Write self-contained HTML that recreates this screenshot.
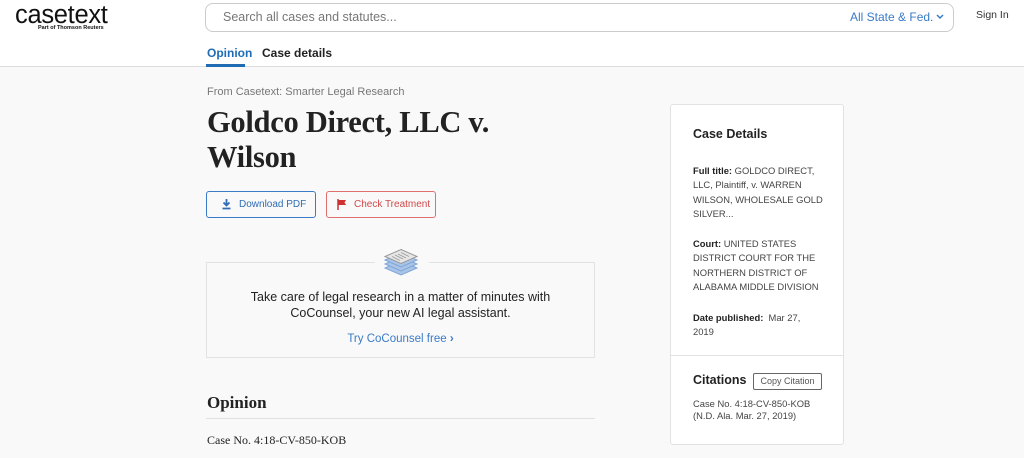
<!DOCTYPE html>
<html><head><style>
*{margin:0;padding:0;box-sizing:border-box}
body{width:1024px;height:458px;overflow:hidden;background:#f9f9f9;font-family:"Liberation Sans",sans-serif;position:relative;color:#222}
.a{position:absolute}
.hdr{left:0;top:0;width:1024px;height:67px;background:#fff;border-bottom:1px solid #ddd}
.serif{font-family:"Liberation Serif",serif}
</style></head><body>
<div class="a hdr"></div>
<div class="a" style="left:15px;top:0px;font-size:25.5px;line-height:30px;letter-spacing:-0.3px;color:#111">casetext</div>
<div class="a" style="left:38px;top:25px;font-size:5.5px;font-weight:bold;color:#111">Part of Thomson Reuters</div>
<div class="a" style="left:205px;top:3px;width:749px;height:29px;border:1px solid #ccc;border-radius:8px;background:#fff"></div>
<div class="a" style="left:223px;top:10px;font-size:12.5px;color:#777">Search all cases and statutes...</div>
<div class="a" style="left:850px;top:10px;font-size:12px;color:#3a7bc8">All State &amp; Fed.</div>
<svg class="a" style="left:936px;top:14px" width="8" height="6"><path d="M1 1 L4 4 L7 1" fill="none" stroke="#3a7bc8" stroke-width="1.5"/></svg>
<div class="a" style="left:976px;top:9px;font-size:10.5px;color:#333">Sign In</div>
<div class="a" style="left:207px;top:46px;font-size:12px;color:#1f6cb5;font-weight:bold">Opinion</div>
<div class="a" style="left:206px;top:64px;width:39px;height:3px;background:#1f6cb5"></div>
<div class="a" style="left:262px;top:46px;font-size:12px;color:#222;font-weight:bold">Case details</div>
<div class="a" style="left:207px;top:86px;font-size:11px;color:#777">From Casetext: Smarter Legal Research</div>
<div class="a serif" style="left:207px;top:105px;font-size:30.5px;line-height:35px;font-weight:bold;color:#222;letter-spacing:-0.3px">Goldco Direct, LLC v.<br>Wilson</div>
<div class="a" style="left:206px;top:191px;width:110px;height:27px;border:1px solid #3a7bc8;border-radius:3px;color:#2e6db4;font-size:10px;line-height:25px;padding-left:32px">Download PDF</div>
<svg class="a" style="left:222px;top:199px" width="9" height="11"><path d="M4.5 0 V6 M1.5 3.5 L4.5 6.5 L7.5 3.5 M0.5 9.5 H8.5" fill="none" stroke="#2e6db4" stroke-width="1.8"/></svg>
<div class="a" style="left:326px;top:191px;width:110px;height:27px;border:1px solid #e07070;border-radius:3px;color:#d04a4a;font-size:10px;line-height:25px;padding-left:27px">Check Treatment</div>
<svg class="a" style="left:337px;top:199px" width="10" height="11"><path d="M1 0 V11" stroke="#d03030" stroke-width="1.5"/><path d="M1.5 1 H9 L7.5 3.5 L9 6 H1.5Z" fill="#d03030"/></svg>
<div class="a" style="left:206px;top:262px;width:389px;height:96px;border:1px solid #e2e2e2"></div>
<div class="a" style="left:375px;top:248px;width:54px;height:30px;background:#f9f9f9"></div>
<svg class="a" style="left:384px;top:249px" width="34" height="28"><g fill="#a9c4e6" stroke="#7ea6d8"><path d="M17 12 L33 19 L17 26 L1 19Z"/><path d="M17 8 L33 15 L17 22 L1 15Z"/><path d="M17 4 L33 11 L17 18 L1 11Z"/><path d="M17 0.5 L33 7.5 L17 14.5 L1 7.5Z" fill="#e6e6e6" stroke="#999"/></g><path d="M11 6 L19 10 M14 5 L22 9 M17 3.5 L25 7.5 M8 7.5 L16 11.5" stroke="#999" stroke-width="0.8"/></svg>
<div class="a" style="left:206px;top:289px;width:389px;text-align:center;font-size:12.5px;line-height:16px;color:#222">Take care of legal research in a matter of minutes with<br>CoCounsel, your new AI legal assistant.</div>
<div class="a" style="left:206px;top:333px;width:389px;text-align:center;font-size:11.5px;color:#3a7bc8">Try CoCounsel free <b>›</b></div>
<div class="a serif" style="left:207px;top:393px;font-size:17px;font-weight:bold;color:#222">Opinion</div>
<div class="a" style="left:206px;top:418px;width:389px;height:1px;background:#e0e0e0"></div>
<div class="a serif" style="left:207px;top:433px;font-size:12px;color:#222">Case No. 4:18-CV-850-KOB</div>
<div class="a" style="left:670px;top:104px;width:174px;height:341px;background:#fff;border:1px solid #e2e2e2;border-radius:3px"></div>
<div class="a" style="left:670px;top:355px;width:174px;height:1px;background:#e2e2e2"></div>
<div class="a" style="left:693px;top:127px;font-size:12.5px;font-weight:bold">Case Details</div>
<div class="a" style="left:693px;top:164px;width:135px;font-size:9.4px;line-height:14.3px;color:#444"><b style="color:#222">Full title:</b> GOLDCO DIRECT, LLC, Plaintiff, v. WARREN WILSON, WHOLESALE GOLD SILVER...</div>
<div class="a" style="left:693px;top:237px;width:135px;font-size:9.4px;line-height:14.3px;color:#444"><b style="color:#222">Court:</b> UNITED STATES DISTRICT COURT FOR THE NORTHERN DISTRICT OF ALABAMA MIDDLE DIVISION</div>
<div class="a" style="left:693px;top:311px;width:130px;font-size:9.4px;line-height:14.3px;color:#444"><b style="color:#222">Date published:</b> &nbsp;Mar 27,<br>2019</div>
<div class="a" style="left:693px;top:373px;font-size:12.5px;font-weight:bold">Citations</div>
<div class="a" style="left:753px;top:373px;width:69px;height:17px;border:1px solid #666;border-radius:2px;font-size:9px;line-height:15px;text-align:center;color:#555">Copy Citation</div>
<div class="a" style="left:693px;top:398px;font-size:9.4px;line-height:12px;color:#444">Case No. 4:18-CV-850-KOB<br>(N.D. Ala. Mar. 27, 2019)</div>
</body></html>
